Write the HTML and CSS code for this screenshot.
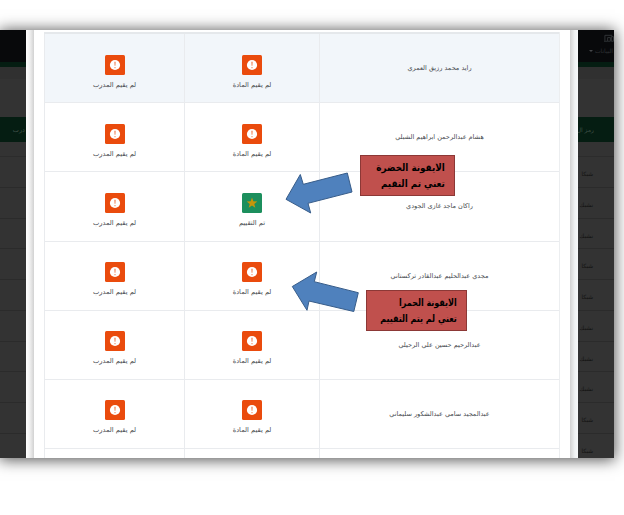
FILE: index.html
```html
<!DOCTYPE html>
<html lang="ar" dir="rtl">
<head>
<meta charset="utf-8">
<title>تقييم المواد والمدربين</title>
<link rel="stylesheet" href="styles.css">
</head>
<body>
<svg class="defs" width="0" height="0" aria-hidden="true">
  <symbol id="alert" viewBox="0 0 20 20"><circle cx="10" cy="10" r="5.1" fill="#fff"/><path d="M9.2 6.8h1.6l-.3 4h-1zM9.4 12h1.2v1.2H9.4z" fill="#f2946e"/></symbol>
  <symbol id="star" viewBox="0 0 20 20"><path d="M10 4.6l1.4 3.7 3.9.2-3 2.4 1 3.9-3.3-2.2-3.3 2.2 1-3.9-3-2.4 3.9-.2z" fill="#c5960c"/></symbol>
</svg>
<main class="slide">
  <aside class="page right">
    <div class="nav">
      <svg class="devices" viewBox="0 0 11 9"><path d="M1 7V1h8M0 7.5h4M4 3.5h3v4H4zM8 2.5h2.5v5H8z" fill="none" stroke="#34373a"/></svg>
      <span>البيانات <i class="caret"></i></span>
    </div>
    <div class="gap"></div>
    <div class="head"><span>رمز ال</span></div>
    <div class="space"></div>
    <div class="line"><span>شبكا</span></div>
    <div class="line"><span>نشبك</span></div>
    <div class="line"><span>نشبك</span></div>
    <div class="line"><span>شبكا</span></div>
    <div class="line"><span>شبكا</span></div>
    <div class="line"><span>نشبك</span></div>
    <div class="line"><span>نشبك</span></div>
    <div class="line"><span>نشبك</span></div>
    <div class="line"><span>شبكا</span></div>
    <div class="line"><span>شبكا</span></div>
  </aside>
  <div class="edge right-edge"></div>
  <section class="panel">
    <div class="table">
      <div class="row tinted">
        <div class="cell name">رايد محمد رزيق العمري</div>
        <div class="cell"><svg class="icon"><use href="#alert"/></svg><span>لم يقيم المادة</span></div>
        <div class="cell"><svg class="icon"><use href="#alert"/></svg><span>لم يقيم المدرب</span></div>
      </div>
      <div class="row">
        <div class="cell name">هشام عبدالرحمن ابراهيم الشبلي</div>
        <div class="cell"><svg class="icon"><use href="#alert"/></svg><span>لم يقيم المادة</span></div>
        <div class="cell"><svg class="icon"><use href="#alert"/></svg><span>لم يقيم المدرب</span></div>
      </div>
      <div class="row">
        <div class="cell name">راكان ماجد غازى الجودي</div>
        <div class="cell"><svg class="icon done"><use href="#star"/></svg><span>تم التقييم</span></div>
        <div class="cell"><svg class="icon"><use href="#alert"/></svg><span>لم يقيم المدرب</span></div>
      </div>
      <div class="row">
        <div class="cell name">مجدي عبدالحليم عبدالقادر تركستاني</div>
        <div class="cell"><svg class="icon"><use href="#alert"/></svg><span>لم يقيم المادة</span></div>
        <div class="cell"><svg class="icon"><use href="#alert"/></svg><span>لم يقيم المدرب</span></div>
      </div>
      <div class="row">
        <div class="cell name">عبدالرحيم حسين علي الرحيلي</div>
        <div class="cell"><svg class="icon"><use href="#alert"/></svg><span>لم يقيم المادة</span></div>
        <div class="cell"><svg class="icon"><use href="#alert"/></svg><span>لم يقيم المدرب</span></div>
      </div>
      <div class="row">
        <div class="cell name">عبدالمجيد سامي عبدالشكور سليماني</div>
        <div class="cell"><svg class="icon"><use href="#alert"/></svg><span>لم يقيم المادة</span></div>
        <div class="cell"><svg class="icon"><use href="#alert"/></svg><span>لم يقيم المدرب</span></div>
      </div>
      <div class="row"><div class="cell"></div><div class="cell"></div><div class="cell"></div></div>
    </div>
  </section>
  <div class="edge left-edge"></div>
  <aside class="page left">
    <div class="nav"></div>
    <div class="gap"></div>
    <div class="head"><span>درب</span></div>
    <div class="space"></div>
    <div class="line"></div><div class="line"></div><div class="line"></div><div class="line"></div><div class="line"></div>
    <div class="line"></div><div class="line"></div><div class="line"></div><div class="line"></div><div class="line"></div>
  </aside>
</main>
<svg class="arrows" viewBox="0 0 624 515" aria-hidden="true">
  <path d="M286 199.3L300.3 174.5 303.3 184.3 347.3 173 352 192 308 203.3 310.7 213z"/>
  <path d="M292.3 286.5L316.7 272 314.3 281.7 358.3 292.7 353.8 311.5 309 301 307 310.3z"/>
</svg>
<div class="callout green-note"><p>الايقونة الخضرة<br>تعني تم التقيم</p></div>
<div class="callout red-note"><p>الايقونة الحمرا<br>تعني لم يتم التقييم</p></div>
</body>
</html>
```
FILE: styles.css
```css
* { box-sizing: border-box; }
body {
  margin: 0;
  width: 624px;
  height: 515px;
  padding-top: 30px;
  overflow: hidden;
  background: #fff;
  font-family: "DejaVu Sans", sans-serif;
  font-size: 6.5px;
  color: #484b50;
}
.defs { position: absolute; }
.slide {
  display: flex;
  width: 614px;
  height: 428px;
  margin-right: 10px;
  box-shadow: 0 1px 14px 1px rgba(0, 0, 0, .68);
}
.page {
  height: 428px;
  overflow: hidden;
  background: #333;
  color: #121212;
  white-space: nowrap;
}
.right { width: 36px; }
.left { width: 26px; }
.nav {
  height: 37px;
  padding-top: 4px;
  background: #08090b;
  border-bottom: 5px solid #051d12;
  color: #2e3033;
}
.nav span { display: block; margin-top: 2px; padding-right: 1px; line-height: 12px; font-size: 6px; }
.devices { display: block; width: 10px; height: 9px; }
.caret {
  display: inline-block;
  border: 2px solid transparent;
  border-top-color: #45474a;
  border-bottom: 0;
  vertical-align: 1px;
}
.gap { height: 50px; border-top: 12px solid #303030; }
.head {
  height: 25px;
  line-height: 26px;
  background: #051d12;
  color: #3f5047;
}
.right .head span, .line span { display: block; padding-right: 21px; }
.right .head span { padding-right: 20px; font-size: 6px; }
.line span { font-size: 5.8px; }
.left .head span { display: block; padding-right: 1px; }
.space { height: 15px; border-bottom: 1px solid #2c2c2c; }
.line { height: 30.75px; line-height: 34px; border-bottom: 1px solid #2b2b2b; }
.edge { width: 8px; }
.right-edge { background: linear-gradient(to right, #d2d2d2, #f0f2f3 60%, #f7f9fa); }
.left-edge { background: linear-gradient(to left, #d2d2d2, #f4f4f4 60%, #fff); }
.panel {
  width: 536px;
  height: 428px;
  padding: 3px 10px 0;
  overflow: hidden;
  background: #fff;
}
.table { border-right: 1px solid #eceef0; }
.row {
  display: grid;
  grid-template-columns: 240px 135px 140px;
  height: 69.2px;
  border-top: 1px solid #e9ebee;
}
.tinted { background: #f2f6fa; border-top: 2px solid #e5e8eb; margin-top: -1px; height: 70.2px; }
.cell {
  display: flex;
  flex-direction: column;
  align-items: center;
  padding-top: 20.5px;
  border-left: 1px solid #e9ebee;
  white-space: nowrap;
}
.cell span { margin-top: 5px; line-height: 10px; font-size: 6.7px; }
.name { justify-content: center; padding: 0; }
.icon { width: 20px; height: 20px; flex: none; border-radius: 1.5px; background: #ea4b0d; }
.done { background: #1c8f5d; }
.arrows { position: absolute; left: 0; top: 0; width: 624px; height: 515px; }
.arrows path { fill: #4f81bd; stroke: #385d8a; stroke-width: 1; }
.callout {
  position: absolute;
  height: 41px;
  padding: 4px 9px 0 0;
  background: #c0504d;
  border: 1px solid #8c3836;
  color: #000;
  font-size: 10px;
  font-weight: bold;
  line-height: 16px;
  white-space: nowrap;
}
.callout p { margin: 0; width: max-content; transform: scaleX(.8); transform-origin: right; }
.green-note { left: 359.5px; top: 155px; width: 95.5px; }
.green-note p { transform: scaleX(.88); }
.red-note { left: 366px; top: 290px; width: 101px; }
```
